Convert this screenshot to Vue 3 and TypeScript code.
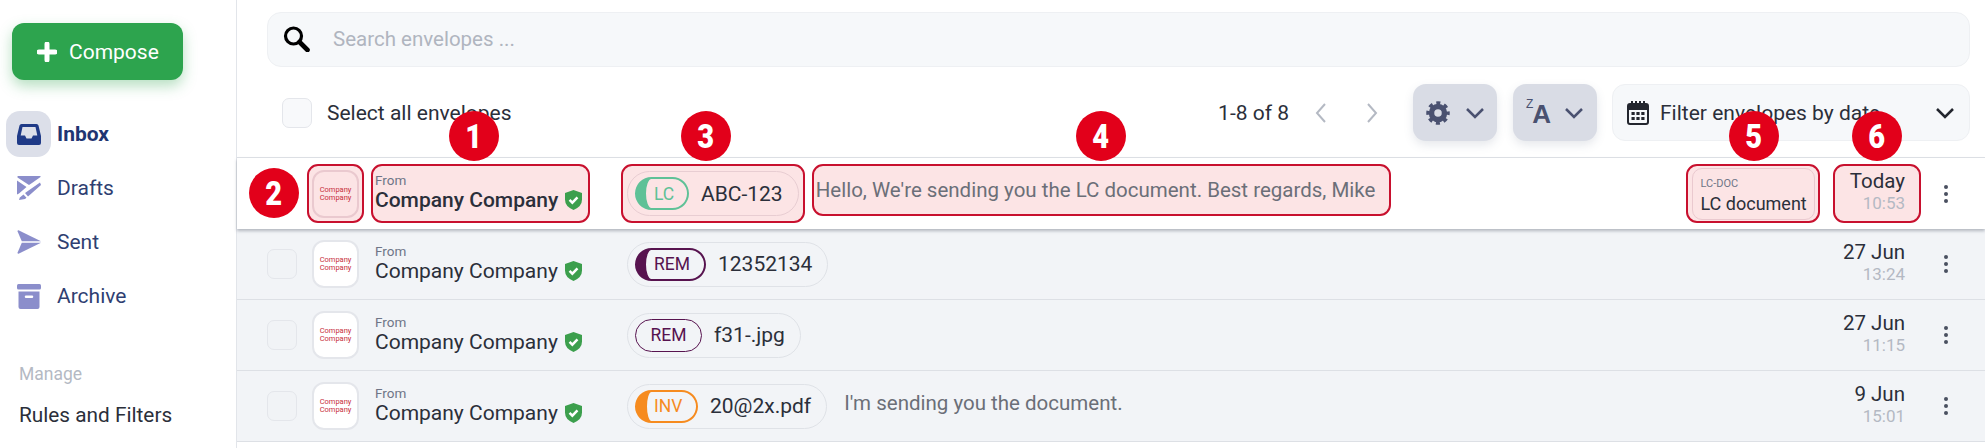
<script setup lang="ts">
// ─── Sidebar ────────────────────────────────────────────────────────────────
const navItems = [
  { key: 'inbox', label: 'Inbox', active: true },
  { key: 'drafts', label: 'Drafts', active: false },
  { key: 'sent', label: 'Sent', active: false },
  { key: 'archive', label: 'Archive', active: false },
]

// ─── Envelopes ──────────────────────────────────────────────────────────────
interface Envelope {
  tag: string
  tagStyle: string
  ref: string
  message?: string
  docType?: string
  docName?: string
  date: string
  time: string
  marked?: boolean
}

const envelopes: Envelope[] = [
  {
    tag: 'LC', tagStyle: 'lc', ref: 'ABC-123',
    message: "Hello, We're sending you the LC document. Best regards, Mike",
    docType: 'LC-DOC', docName: 'LC document',
    date: 'Today', time: '10:53', marked: true,
  },
  { tag: 'REM', tagStyle: 'rem', ref: '12352134', date: '27 Jun', time: '13:24' },
  { tag: 'REM', tagStyle: 'rem-open', ref: 'f31-.jpg', date: '27 Jun', time: '11:15' },
  {
    tag: 'INV', tagStyle: 'inv', ref: '20@2x.pdf',
    message: "I'm sending you the document.",
    date: '9 Jun', time: '15:01',
  },
]

// ─── Numbered callouts over the first row ───────────────────────────────────
const callouts = [
  { n: 1, x: 474, y: 136 },
  { n: 2, x: 274, y: 193 },
  { n: 3, x: 706, y: 136 },
  { n: 4, x: 1101, y: 136 },
  { n: 5, x: 1754, y: 136 },
  { n: 6, x: 1877, y: 136 },
]
</script>

<template>
  <div class="page">
    <aside class="side">
      <button class="compose">
        <svg class="compose__plus" viewBox="0 0 20 20"><path d="M10 2v16M2 10h16" /></svg>
        Compose
      </button>

      <nav class="nav">
        <div v-for="item in navItems" :key="item.key" class="nav__item" :class="{ 'nav__item--active': item.active }">
          <span class="nav__icon">
            <svg v-if="item.key === 'inbox'" width="24" height="21" viewBox="0 0 24 21">
              <path fill="#1f3a87" fill-rule="evenodd" d="M4.5 0h15q1.6 0 2 1.6L24 12v7q0 2-2 2H2q-2 0-2-2v-7L2.500 1.600Q2.900 0 4.500 0ZM5.500 3 3.700 11.500H8l1.500 3h5l1.500-3h4.300L18.500 3Z" />
            </svg>
            <svg v-else-if="item.key === 'drafts'" width="24" height="24" viewBox="0 0 24 24">
              <path fill="#8b8ecb" d="M1 0h22q1 0 .5 1L15 7 12 9 .5 1.500Q0 0 1 0Z" />
              <path fill="#8b8ecb" d="M0 4.500 9.500 11 2 17.500l-2 1ZM23 6.500l1 2.500-13 11.500-3-3.500Z" />
              <path fill="#8b8ecb" d="M6.500 18.500l3 3.200-1.500 1.300L2 24l.8-2.500Z" />
            </svg>
            <svg v-else-if="item.key === 'sent'" width="24" height="24" viewBox="0 0 24 24">
              <path fill="#8b8ecb" d="M1.500.2 24 11.300H4.800L.6 1.400Q.4 0 1.500.200Z" />
              <path fill="#8b8ecb" d="M24 12.700 1.500 23.800Q.4 24 .6 22.600L4.800 12.700Z" />
            </svg>
            <svg v-else width="24" height="25" viewBox="0 0 24 25">
              <rect fill="#8b8ecb" width="24" height="5.500" rx="1.500" />
              <path fill="#8b8ecb" fill-rule="evenodd" d="M1.500 7.500h21V23q0 2-2 2h-17q-2 0-2-2ZM9 11.500a1 1 0 0 0 0 2.500h6a1 1 0 0 0 0-2.500Z" />
            </svg>
          </span>
          <span class="nav__label">{{ item.label }}</span>
        </div>
      </nav>

      <div class="side__heading">Manage</div>
      <div class="side__link">Rules and Filters</div>
    </aside>

    <main class="main">
      <div class="top">
        <div class="search">
          <svg class="search__icon" viewBox="0 0 27 26">
            <circle cx="10.500" cy="10" r="8" fill="none" stroke="#000" stroke-width="3.200" />
            <path d="M16.500 16l8 8" stroke="#000" stroke-width="4.600" stroke-linecap="round" />
          </svg>
          <span class="search__text">Search envelopes ...</span>
        </div>

        <div class="tools">
          <span class="check check--all"></span>
          <span class="tools__select">Select all envelopes</span>
          <span class="tools__count">1-8 of 8</span>
          <svg class="pager" viewBox="0 0 14 22"><path d="M11 2 3 11l8 9" /></svg>
          <svg class="pager pager--next" viewBox="0 0 14 22"><path d="m3 2 8 9-8 9" /></svg>

          <button class="tool-btn">
            <svg width="24" height="24" viewBox="0 0 24 24">
              <circle cx="12" cy="12" r="6.500" fill="none" stroke="#4a5170" stroke-width="5.500" />
              <circle cx="12" cy="12" r="10" fill="none" stroke="#4a5170" stroke-width="3.500" stroke-dasharray="4 3.854" stroke-dashoffset="2" />
            </svg>
            <svg class="caret" viewBox="0 0 20 12"><path d="m2 2 8 8 8-8" /></svg>
          </button>
          <button class="tool-btn tool-btn--sort">
            <span class="sort"><span class="sort__z">Z</span><span class="sort__a">A</span></span>
            <svg class="caret" viewBox="0 0 20 12"><path d="m2 2 8 8 8-8" /></svg>
          </button>

          <div class="date-filter">
            <svg width="22" height="24" viewBox="0 0 22 24">
              <path fill="#23262e" fill-rule="evenodd" d="M4 0h2v2h2V0h2v2h2V0h2v2h2V0h2v2h1q3 0 3 3v16q0 3-3 3H3q-3 0-3-3V5q0-3 3-3h1Zm-2 9v12q0 1 1 1h16q1 0 1-1V9Z" />
              <path fill="#23262e" d="M4.500 11h3.200v3H4.500Zm4.900 0h3.200v3H9.400Zm4.900 0h3.200v3h-3.200ZM4.500 16h3.200v3H4.500Zm4.900 0h3.200v3H9.400Zm4.900 0h3.200v3h-3.200Z" />
            </svg>
            <span class="date-filter__text">Filter envelopes by date</span>
            <svg class="caret caret--dark" viewBox="0 0 20 12"><path d="m2 2 8 8 8-8" /></svg>
          </div>
        </div>
      </div>

      <div class="list">
        <div v-for="env in envelopes" :key="env.ref" class="row" :class="{ 'row--marked': env.marked }">
          <span class="check" :class="{ 'check--hidden': env.marked }"></span>

          <div class="cell cell--logo">
            <div class="logo">Company<br />Company</div>
          </div>

          <div class="cell cell--sender">
            <div class="sender__from">From</div>
            <div class="sender__name">
              Company Company
              <svg class="shield" viewBox="0 0 18 21">
                <path fill="#3c9f4d" d="M9 0 18 3.200V10q0 7.500-9 11Q0 17.500 0 10V3.200Z" />
                <path fill="none" stroke="#fff" stroke-width="2.600" d="m4.800 10.300 3 3 5.400-5.600" />
              </svg>
            </div>
          </div>

          <div class="cell cell--pill">
            <div class="pill">
              <span class="tag" :class="`tag--${env.tagStyle}`">{{ env.tag }}</span>
              <span class="pill__ref">{{ env.ref }}</span>
            </div>
          </div>

          <div v-if="env.message" class="cell cell--message">{{ env.message }}</div>

          <div class="row__spacer"></div>

          <div v-if="env.docType" class="cell cell--doc">
            <div class="doc">
              <div class="doc__type">{{ env.docType }}</div>
              <div class="doc__name">{{ env.docName }}</div>
            </div>
          </div>

          <div class="cell cell--date">
            <div class="date__day">{{ env.date }}</div>
            <div class="date__time">{{ env.time }}</div>
          </div>

          <svg class="dots" viewBox="0 0 6 20">
            <circle cx="3" cy="3" r="2" /><circle cx="3" cy="10" r="2" /><circle cx="3" cy="17" r="2" />
          </svg>
        </div>
      </div>
    </main>

    <span
      v-for="c in callouts"
      :key="c.n"
      class="callout"
      :style="{ left: `${c.x - 25}px`, top: `${c.y - 25}px` }"
    ><span class="callout__digit">{{ c.n }}</span></span>
  </div>
</template>

<style scoped>
.page {
  position: relative;
  display: flex;
  width: 1985px;
  height: 448px;
  overflow: hidden;
  background: #fff;
  font-family: 'Roboto', sans-serif;
  font-size: 21px;
  color: #2b2f3a;
}

/* ── Sidebar ────────────────────────────────────────────────────────────── */
.side {
  flex: none;
  width: 230px;
  border-right: 1px solid #e2e5ea;
  padding: 23px 0 0 6px;
}

.compose {
  display: flex;
  align-items: center;
  gap: 12px;
  width: 171px;
  height: 57px;
  margin-left: 6px;
  padding: 0 0 0 25px;
  border: 0;
  border-radius: 12px;
  background: #2da44e;
  box-shadow: 0 6px 14px rgba(45, 164, 78, 0.35);
  color: #fff;
  font: 400 21px 'Roboto', sans-serif;
}

.compose__plus {
  width: 20px;
  height: 20px;
  fill: none;
  stroke: #fff;
  stroke-width: 5;
  stroke-linecap: round;
}

.nav {
  margin-top: 31px;
  display: flex;
  flex-direction: column;
  gap: 8px;
}

.nav__item {
  display: flex;
  align-items: center;
  gap: 6px;
  height: 46px;
  color: #2f3f72;
}

.nav__icon {
  display: flex;
  align-items: center;
  justify-content: center;
  width: 45px;
  height: 46px;
  border-radius: 14px;
}

.nav__item--active .nav__icon {
  background: #dcdfe9;
}

.nav__item--active .nav__label {
  font-weight: 700;
  color: #1f3572;
}

.side__heading {
  margin: 45px 0 0 13px;
  font-size: 17.500px;
  color: #b4b9c3;
}

.side__link {
  margin: 19px 0 0 13px;
  font-size: 20.800px;
  color: #2b2f3a;
}

/* ── Top bars ───────────────────────────────────────────────────────────── */
.main {
  flex: 1;
  min-width: 0;
}

.top {
  padding: 12px 15px 16px 30px;
}

.search {
  display: flex;
  align-items: center;
  height: 55px;
  box-sizing: border-box;
  padding: 0 0 2px 15px;
  background: #f6f8fa;
  border: 1px solid #eef0f3;
  border-radius: 14px;
}

.search__icon {
  width: 27px;
  height: 26px;
}

.search__text {
  margin-left: 23px;
  font-size: 20.500px;
  color: #b0b5bf;
}

.tools {
  display: flex;
  align-items: center;
  height: 57px;
  margin-top: 17px;
}

.check {
  flex: none;
  width: 30px;
  height: 30px;
  box-sizing: border-box;
  border: 1px solid #e4e6eb;
  border-radius: 7px;
  background: #f1f3f6;
}

.check--all {
  margin-left: 15px;
  background: #f8f9fb;
}

.check--hidden {
  visibility: hidden;
}

.tools__select {
  margin-left: 15px;
  flex: 1;
}

.tools__count {
  color: #2b2f3a;
}

.pager {
  width: 14px;
  height: 22px;
  margin-left: 25px;
  fill: none;
  stroke: #b4b9c3;
  stroke-width: 2;
}

.pager--next {
  margin-left: 37px;
}

.tool-btn {
  display: flex;
  align-items: center;
  justify-content: center;
  gap: 15px;
  width: 84px;
  height: 57px;
  margin-left: 34px;
  padding: 0;
  border: 0;
  border-radius: 13px;
  background: #d9dce5;
  box-shadow: 0 4px 10px rgba(90, 100, 130, 0.15);
}

.tool-btn--sort {
  margin-left: 16px;
  gap: 13px;
}

.caret {
  width: 20px;
  height: 12px;
  fill: none;
  stroke: #4a5170;
  stroke-width: 2.500;
}

.caret--dark {
  margin-left: auto;
  stroke: #23262e;
}

.sort {
  display: flex;
  align-items: flex-start;
  color: #4a5170;
  line-height: 1;
}

.sort__z {
  font-size: 12px;
  font-weight: 500;
}

.sort__a {
  margin: 3px 0 0 -1px;
  font-size: 26px;
  font-weight: 700;
}

.date-filter {
  display: flex;
  align-items: center;
  gap: 11px;
  width: 358px;
  height: 57px;
  box-sizing: border-box;
  margin-left: 15px;
  padding: 0 14px;
  background: #f6f8fa;
  border: 1px solid #eef0f3;
  border-radius: 13px;
}

/* ── Rows ───────────────────────────────────────────────────────────────── */
.list {
  border-top: 1px solid #dfe2e7;
}

.row {
  display: flex;
  align-items: center;
  height: 70px;
  padding-left: 30px;
  background: #f2f4f7;
  border-bottom: 1px solid #dde0e5;
}

.row--marked {
  position: relative;
  height: 71px;
  background: #fff;
  border-bottom: 0;
  box-shadow: 0 2px 3px rgba(60, 70, 90, 0.35);
}

.cell {
  box-sizing: border-box;
  border: 2px solid transparent;
  border-radius: 11px;
}

.row--marked .cell {
  background: #fce4e5;
  border-color: #c8102e;
}

.cell--logo {
  flex: none;
  display: flex;
  align-items: center;
  justify-content: center;
  width: 57px;
  height: 59px;
  margin-left: 10px;
}

.logo {
  display: flex;
  align-items: center;
  justify-content: center;
  width: 47px;
  height: 48px;
  box-sizing: border-box;
  border: 2px solid #e4e6eb;
  border-radius: 12px;
  background: #fff;
  color: #c8303c;
  font-size: 7.500px;
  line-height: 8px;
  text-align: center;
}

.row--marked .logo {
  background: transparent;
  border-color: #eac9cf;
}

.cell--sender {
  flex: none;
  width: 219px;
  height: 59px;
  margin-left: 7px;
  padding: 7px 0 0 2px;
}

.sender__from {
  font-size: 13.500px;
  line-height: 15px;
  color: #6f7587;
}

.sender__name {
  display: flex;
  align-items: center;
  gap: 7px;
  font-size: 21px;
  line-height: 24px;
  color: #2b2f3a;
}

.row--marked .sender__name {
  font-weight: 500;
}

.shield {
  width: 17px;
  height: 20px;
}

.cell--pill {
  flex: none;
  display: flex;
  align-items: center;
  height: 59px;
  margin-left: 31px;
  padding: 0 4px;
}

.pill {
  display: flex;
  align-items: center;
  gap: 12px;
  height: 45px;
  box-sizing: border-box;
  padding: 0 15px 0 7px;
  border: 1px solid #dfe2e7;
  border-radius: 23px;
}

.row--marked .pill {
  border-color: #e8cdd2;
}

.tag {
  display: flex;
  align-items: center;
  justify-content: flex-start;
  height: 33px;
  box-sizing: border-box;
  border: 2px solid;
  border-radius: 17px;
  font-size: 17.500px;
}

.tag--lc {
  width: 54px;
  padding-left: 8px;
  border-color: #5fc197;
  border-left-width: 11px;
  color: #5fc197;
}

.tag--rem {
  width: 71px;
  padding-left: 8px;
  border-color: #57134f;
  border-left-width: 11px;
  color: #57134f;
}

.tag--rem-open {
  width: 67px;
  justify-content: center;
  border-width: 1px;
  border-color: #57134f;
  color: #57134f;
}

.tag--inv {
  width: 63px;
  padding-left: 7px;
  border-color: #f68b1f;
  border-left-width: 12px;
  color: #f68b1f;
}

.cell--message {
  flex: none;
  height: 52px;
  margin: 0 0 7px 7px;
  padding: 0 14px 0 2px;
  font-size: 20.500px;
  line-height: 48px;
  color: #6b6f78;
}

.row__spacer {
  flex: 1;
}

.cell--doc {
  flex: none;
  display: flex;
  align-items: center;
  justify-content: center;
  width: 134px;
  height: 59px;
  margin-right: 13px;
}

.doc {
  width: 123px;
  height: 52px;
  box-sizing: border-box;
  padding: 8px 0 0 8px;
  border: 1px solid #eac9cf;
  border-radius: 10px;
}

.doc__type {
  font-size: 11px;
  line-height: 14px;
  color: #6f7587;
}

.doc__name {
  font-size: 18px;
  line-height: 25px;
}

.cell--date {
  flex: none;
  width: 88px;
  height: 59px;
  padding: 2px 14px 0 0;
  font-size: 20.500px;
  text-align: right;
}

.date__day {
  line-height: 26px;
}

.date__time {
  font-size: 17px;
  line-height: 19px;
  color: #b4b9c3;
}

.dots {
  flex: none;
  width: 6px;
  height: 20px;
  margin: 0 36px 0 22px;
  fill: #4a5060;
}

/* ── Numbered callouts ──────────────────────────────────────────────────── */
.callout {
  position: absolute;
  display: flex;
  align-items: center;
  justify-content: center;
  width: 50px;
  height: 50px;
  border-radius: 50%;
  background: #e2001a;
  color: #fff;
  font-size: 33px;
  font-weight: 900;
}

.callout__digit {
  display: inline-block;
  transform: scaleX(0.88);
}
</style>
